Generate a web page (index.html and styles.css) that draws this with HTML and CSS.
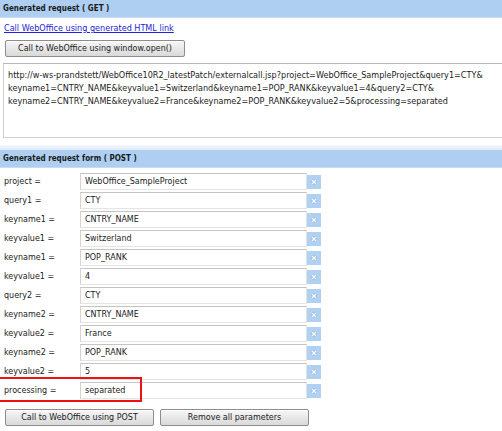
FILE: index.html
```html
<!DOCTYPE html>
<html>
<head>
<meta charset="utf-8">
<link rel="stylesheet" href="styles.css">
</head>
<body>
<div class="page">
  <section class="sec get">
    <div class="hdr">Generated request ( GET )</div>
    <div class="get-body">
      <a class="link" href="#">Call WebOffice using generated HTML link</a>
      <button class="btn btn-open">Call to WebOffice using window.open()</button>
      <div class="url">http://w-ws-prandstett/WebOffice10R2_latestPatch/externalcall.jsp?project=WebOffice_SampleProject&amp;query1=CTY&amp;<br>keyname1=CNTRY_NAME&amp;keyvalue1=Switzerland&amp;keyname1=POP_RANK&amp;keyvalue1=4&amp;query2=CTY&amp;<br>keyname2=CNTRY_NAME&amp;keyvalue2=France&amp;keyname2=POP_RANK&amp;keyvalue2=5&amp;processing=separated</div>
    </div>
  </section>
  <div class="sep"></div>
  <section class="sec post">
    <div class="hdr">Generated request form ( POST )</div>
    <div class="rows">
      <div class="row"><span class="lbl">project =</span><span class="inp">WebOffice_SampleProject</span><span class="clr"><svg viewBox="0 0 14 14" width="14" height="14"><path d="M5 5 L9 9 M9 5 L5 9" stroke="#8fb2db" stroke-width="2.6"/><path d="M5 5 L9 9 M9 5 L5 9" stroke="#ffffff" stroke-width="1.3"/></svg></span></div>
      <div class="row"><span class="lbl">query1 =</span><span class="inp">CTY</span><span class="clr"><svg viewBox="0 0 14 14" width="14" height="14"><path d="M5 5 L9 9 M9 5 L5 9" stroke="#8fb2db" stroke-width="2.6"/><path d="M5 5 L9 9 M9 5 L5 9" stroke="#ffffff" stroke-width="1.3"/></svg></span></div>
      <div class="row"><span class="lbl">keyname1 =</span><span class="inp">CNTRY_NAME</span><span class="clr"><svg viewBox="0 0 14 14" width="14" height="14"><path d="M5 5 L9 9 M9 5 L5 9" stroke="#8fb2db" stroke-width="2.6"/><path d="M5 5 L9 9 M9 5 L5 9" stroke="#ffffff" stroke-width="1.3"/></svg></span></div>
      <div class="row"><span class="lbl">keyvalue1 =</span><span class="inp">Switzerland</span><span class="clr"><svg viewBox="0 0 14 14" width="14" height="14"><path d="M5 5 L9 9 M9 5 L5 9" stroke="#8fb2db" stroke-width="2.6"/><path d="M5 5 L9 9 M9 5 L5 9" stroke="#ffffff" stroke-width="1.3"/></svg></span></div>
      <div class="row"><span class="lbl">keyname1 =</span><span class="inp">POP_RANK</span><span class="clr"><svg viewBox="0 0 14 14" width="14" height="14"><path d="M5 5 L9 9 M9 5 L5 9" stroke="#8fb2db" stroke-width="2.6"/><path d="M5 5 L9 9 M9 5 L5 9" stroke="#ffffff" stroke-width="1.3"/></svg></span></div>
      <div class="row"><span class="lbl">keyvalue1 =</span><span class="inp">4</span><span class="clr"><svg viewBox="0 0 14 14" width="14" height="14"><path d="M5 5 L9 9 M9 5 L5 9" stroke="#8fb2db" stroke-width="2.6"/><path d="M5 5 L9 9 M9 5 L5 9" stroke="#ffffff" stroke-width="1.3"/></svg></span></div>
      <div class="row"><span class="lbl">query2 =</span><span class="inp">CTY</span><span class="clr"><svg viewBox="0 0 14 14" width="14" height="14"><path d="M5 5 L9 9 M9 5 L5 9" stroke="#8fb2db" stroke-width="2.6"/><path d="M5 5 L9 9 M9 5 L5 9" stroke="#ffffff" stroke-width="1.3"/></svg></span></div>
      <div class="row"><span class="lbl">keyname2 =</span><span class="inp">CNTRY_NAME</span><span class="clr"><svg viewBox="0 0 14 14" width="14" height="14"><path d="M5 5 L9 9 M9 5 L5 9" stroke="#8fb2db" stroke-width="2.6"/><path d="M5 5 L9 9 M9 5 L5 9" stroke="#ffffff" stroke-width="1.3"/></svg></span></div>
      <div class="row"><span class="lbl">keyvalue2 =</span><span class="inp">France</span><span class="clr"><svg viewBox="0 0 14 14" width="14" height="14"><path d="M5 5 L9 9 M9 5 L5 9" stroke="#8fb2db" stroke-width="2.6"/><path d="M5 5 L9 9 M9 5 L5 9" stroke="#ffffff" stroke-width="1.3"/></svg></span></div>
      <div class="row"><span class="lbl">keyname2 =</span><span class="inp">POP_RANK</span><span class="clr"><svg viewBox="0 0 14 14" width="14" height="14"><path d="M5 5 L9 9 M9 5 L5 9" stroke="#8fb2db" stroke-width="2.6"/><path d="M5 5 L9 9 M9 5 L5 9" stroke="#ffffff" stroke-width="1.3"/></svg></span></div>
      <div class="row"><span class="lbl">keyvalue2 =</span><span class="inp">5</span><span class="clr"><svg viewBox="0 0 14 14" width="14" height="14"><path d="M5 5 L9 9 M9 5 L5 9" stroke="#8fb2db" stroke-width="2.6"/><path d="M5 5 L9 9 M9 5 L5 9" stroke="#ffffff" stroke-width="1.3"/></svg></span></div>
      <div class="row row-mark"><span class="lbl">processing =</span><span class="inp">separated</span><span class="clr"><svg viewBox="0 0 14 14" width="14" height="14"><path d="M5 5 L9 9 M9 5 L5 9" stroke="#8fb2db" stroke-width="2.6"/><path d="M5 5 L9 9 M9 5 L5 9" stroke="#ffffff" stroke-width="1.3"/></svg></span><span class="mark"></span></div>
    </div>
    <div class="actions">
      <button class="btn btn-act">Call to WebOffice using POST</button>
      <button class="btn btn-act">Remove all parameters</button>
    </div>
  </section>
</div>
</body>
</html>
```

FILE: styles.css
```css
html, body {
  margin: 0;
  padding: 0;
  background: #ffffff;
  overflow: hidden;
}
.page {
  width: 502px;
  height: 431px;
  overflow: hidden;
  font-family: "DejaVu Sans", Verdana, sans-serif;
  font-size: 8px;
  color: #222;
}
.hdr {
  height: 17px;
  line-height: 17px;
  background: #aecff2;
  border-bottom: 1px solid #c6dcf4;
  padding-left: 3px;
  font-family: "DejaVu Sans Condensed", "DejaVu Sans", sans-serif;
  font-weight: bold;
  font-size: 8px;
  color: #1a1a1a;
}
.get-body {
  display: flex;
  flex-direction: column;
  align-items: flex-start;
  padding: 0 0 0 3px;
}
.link {
  margin-top: 4px;
  margin-left: 1px;
  height: 13px;
  line-height: 13px;
  font-size: 8.1px;
  color: #2323d6;
  text-decoration: underline;
}
.btn {
  font-family: "DejaVu Sans", Verdana, sans-serif;
  font-size: 8px;
  color: #222;
  height: 17px;
  padding: 0;
  border: 1px solid #8d8d8d;
  border-radius: 2px;
  background: linear-gradient(#f7f7f7, #e8e8e8 50%, #d9d9d9);
  box-shadow: inset 0 1px 0 #ffffff;
}
.btn-open {
  margin-top: 5px;
  margin-left: 2px;
  width: 180px;
}
.url {
  margin-top: 6px;
  width: 512px;
  height: 60px;
  border: 1px solid #cfcfcf;
  border-top-color: #b8b8b8;
  padding: 5px 0 8px 4px;
  line-height: 13px;
  font-size: 8.1px;
  white-space: nowrap;
  color: #222;
  box-sizing: content-box;
}
.sep {
  margin-top: 7px;
  height: 5px;
  background: linear-gradient(#f2f7fc, #dfeaf7);
}
.rows {
  display: flex;
  flex-direction: column;
  gap: 2px;
  padding-top: 5px;
}
.row {
  position: relative;
  display: flex;
  align-items: center;
  height: 17px;
}
.lbl {
  width: 76px;
  padding-left: 4px;
}
.inp {
  width: 221px;
  height: 15px;
  line-height: 15px;
  padding-left: 4px;
  border: 1px solid #e4e4e4;
  border-top-color: #c4c4c4;
  border-left-color: #d4d4d4;
  background: #fff;
}
.clr {
  width: 14px;
  height: 14px;
  background: #b1d1f3;
  display: flex;
}
.mark {
  position: absolute;
  left: -2px;
  top: -5px;
  width: 140px;
  height: 21px;
  border: 2px solid #ee1111;
}
.actions {
  display: flex;
  gap: 6px;
  padding: 10px 0 0 5px;
}
.btn-act {
  width: 149px;
}
```
